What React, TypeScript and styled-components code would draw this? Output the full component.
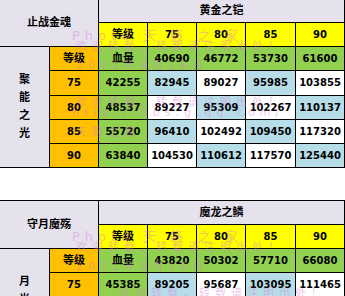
import React from "react";
import styled, { createGlobalStyle } from "styled-components";

const GlobalStyle = createGlobalStyle`
    html, body {
        margin: 0;
        padding: 0;
        background: #ffffff;
        overflow: hidden;
    }
    body {
        font-family: "DejaVu Sans", "Noto Sans CJK SC", sans-serif;
    }
`;

type Tone = "head" | "side" | "yellow" | "orange" | "green" | "blue" | "white";

const tones: Record<Tone, string> = {
    head: "#e5e1ed",
    side: "#e5e1ed",
    yellow: "#ffff00",
    orange: "#ffc000",
    green: "#92d050",
    blue: "#b7dde8",
    white: "#ffffff",
};

type Row = {
    level: number;
    hp: number | null;
    values: (number | null)[];
};

type Gear = {
    set: string;
    item: string;
    side: string;
    levels: number[];
    base: number[];
    rows: Row[];
};

const gears: Gear[] = [
    {
        set: "止战金魂",
        item: "黄金之铠",
        side: "聚能之光",
        levels: [75, 80, 85, 90],
        base: [40690, 46772, 53730, 61600],
        rows: [
            { level: 75, hp: 42255, values: [82945, 89027, 95985, 103855] },
            { level: 80, hp: 48537, values: [89227, 95309, 102267, 110137] },
            { level: 85, hp: 55720, values: [96410, 102492, 109450, 117320] },
            { level: 90, hp: 63840, values: [104530, 110612, 117570, 125440] },
        ],
    },
    {
        set: "守月魔殇",
        item: "魔龙之鳞",
        side: "月光之华",
        levels: [75, 80, 85, 90],
        base: [43820, 50302, 57710, 66080],
        rows: [
            { level: 75, hp: 45385, values: [89205, 95687, 103095, 111465] },
            { level: 80, hp: null, values: [null, null, null, null] },
            { level: 85, hp: null, values: [null, null, null, null] },
            { level: 90, hp: null, values: [null, null, null, null] },
        ],
    },
];

const Page = styled.div`
    position: relative;
    display: flex;
    flex-direction: column;
    gap: 32px;
    margin-top: -2px;
    margin-left: -1px;
`;

const Sheet = styled.div`
    display: grid;
    grid-template-columns: 49px 48px 48px 48px 48px 49px 48px;
    grid-template-rows: 23px 23px 23px 24px 23px 23px 23px;
    gap: 1px;
    padding: 1px;
    width: max-content;
    background: #000000;
`;

const Cell = styled.div<{ $tone: Tone; $cols?: number; $rows?: number; $cjk?: boolean }>`
    display: flex;
    align-items: center;
    justify-content: center;
    grid-column: span ${(p) => p.$cols || 1};
    grid-row: span ${(p) => p.$rows || 1};
    background: ${(p) => tones[p.$tone]};
    color: #000000;
    font-weight: 700;
    font-size: ${(p) => (p.$cjk ? "11px" : "10px")};
    line-height: 1;
    white-space: nowrap;
    overflow: hidden;
`;

const SideText = styled.div`
    display: flex;
    flex-direction: column;
    align-items: center;
    font-size: 11px;
    line-height: 18px;
`;

const Watermark = styled.div<{ $size?: number }>`
    position: absolute;
    color: rgba(214, 120, 214, 0.42);
    font-family: "DejaVu Sans", "Noto Sans CJK SC", sans-serif;
    font-size: ${(p) => p.$size || 11}px;
    letter-spacing: 5px;
    white-space: nowrap;
    pointer-events: none;
`;

const GearSheet = ({ gear }: { gear: Gear }) => {
    return (
        <Sheet>
            <Cell $tone="head" $cols={2} $rows={2} $cjk>{gear.set}</Cell>
            <Cell $tone="head" $cols={5} $cjk>{gear.item}</Cell>

            <Cell $tone="yellow" $cjk>等级</Cell>
            {gear.levels.map((lv) => (
                <Cell key={`lv-${lv}`} $tone="yellow">{lv}</Cell>
            ))}

            <Cell $tone="side" $rows={gear.rows.length + 1}>
                <SideText>
                    {gear.side.split("").map((ch, idx) => (
                        <span key={idx}>{ch}</span>
                    ))}
                </SideText>
            </Cell>
            <Cell $tone="orange" $cjk>等级</Cell>
            <Cell $tone="green" $cjk>血量</Cell>
            {gear.base.map((v, idx) => (
                <Cell key={`base-${idx}`} $tone="green">{v}</Cell>
            ))}

            {gear.rows.map((row, r) => (
                <React.Fragment key={row.level}>
                    <Cell $tone="orange">{row.level}</Cell>
                    <Cell $tone="green">{row.hp ?? ""}</Cell>
                    {row.values.map((v, c) => (
                        <Cell key={`${r}-${c}`} $tone={(r + c) % 2 === 0 ? "blue" : "white"}>
                            {v ?? ""}
                        </Cell>
                    ))}
                </React.Fragment>
            ))}
        </Sheet>
    );
};

export default function App() {
    return (
        <>
            <GlobalStyle />
            <Page>
                {gears.map((gear) => (
                    <GearSheet key={gear.set} gear={gear} />
                ))}

                <Watermark $size={13} style={{ left: 73, top: 27 }}>Photo 天 籁 之 家</Watermark>
                <Watermark style={{ left: 77, top: 39 }}>欢迎转载，转载请注明出处！</Watermark>
                <Watermark style={{ left: 77, top: 58 }}>2011年9月16日</Watermark>
                <Watermark style={{ left: 77, top: 95 }}>欢迎转载，转载请注明出处！</Watermark>
                <Watermark style={{ left: 73, top: 108 }}>http://bbs.g.qq.com/</Watermark>
                <Watermark style={{ left: 77, top: 125 }}>天籁之家</Watermark>

                <Watermark $size={13} style={{ left: 73, top: 228 }}>Photo 天 籁 之 家</Watermark>
                <Watermark style={{ left: 77, top: 240 }}>欢迎转载，转载请注明出处！</Watermark>
                <Watermark style={{ left: 77, top: 259 }}>2011年9月16日</Watermark>
                <Watermark style={{ left: 120, top: 286 }}>欢迎转载，转载请注明出处！</Watermark>
            </Page>
        </>
    );
}
